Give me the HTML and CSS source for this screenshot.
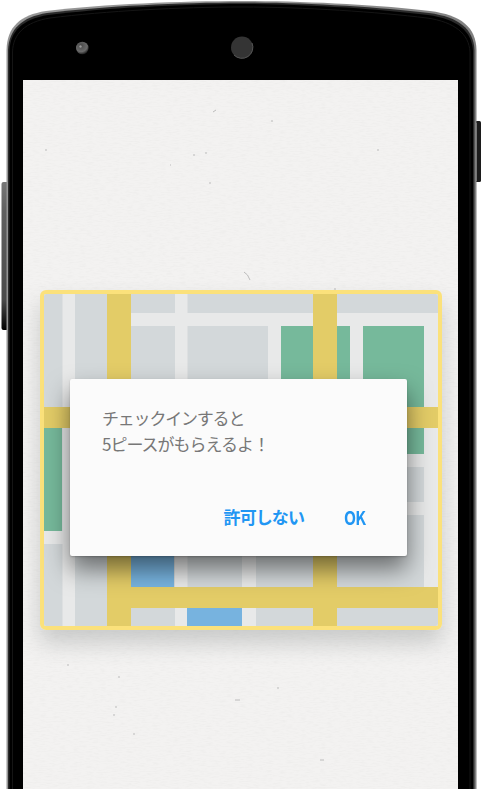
FILE: index.html
```html
<!DOCTYPE html>
<html lang="ja">
<head>
<meta charset="utf-8">
<title>チェックイン</title>
<link rel="stylesheet" href="styles.css">
</head>
<body>
<div class="phone">
  <svg class="frame" width="482" height="789" viewBox="0 0 482 789" aria-hidden="true">
    <defs>
      <linearGradient id="rim" x1="0" x2="1" y1="0" y2="0">
        <stop offset="0" stop-color="#959595"/><stop offset=".5" stop-color="#999"/><stop offset="1" stop-color="#808080"/>
      </linearGradient>
      <linearGradient id="key" x1="0" x2="0" y1="0" y2="1">
        <stop offset="0" stop-color="#777"/><stop offset=".2" stop-color="#606060"/><stop offset=".8" stop-color="#4a4a4a"/><stop offset="1" stop-color="#000"/>
      </linearGradient>
      <radialGradient id="lens" cx=".4" cy=".3" r=".7">
        <stop offset="0" stop-color="#444"/><stop offset=".25" stop-color="#555"/><stop offset=".7" stop-color="#6a6a6a"/><stop offset="1" stop-color="#222"/>
      </radialGradient>
    </defs>
    <rect x="1.500" y="182" width="7" height="148" rx="2" fill="url(#key)"/>
    <rect x="475" y="121" width="6" height="61" rx="1.500" fill="#1c1c1c"/>
    <path d="M6.500 800V50C7 27 20 15 46 11C105 4 180 1 242 1S380 5 430 11C461 15 476 27 476.500 50V800Z" fill="url(#rim)"/>
    <path d="M8 800V50C9 29 22 17 47 13C105 6 180 2.500 242 2.500S378 7 429 13C459 17 473.500 29 474.500 50V800Z" fill="#2b2b2b"/>
    <path d="M9.500 800V51C10 31 23 19 48 15C105 8 180 4 242 4S378 9 428 15C457 19 472 31 473 51V800Z" fill="#000"/>
    <path d="M12.500 800V52C13 34 25 22 50 18C105 11 180 7 242 7S378 12 427 18C455 22 469 34 470 52V800" fill="none" stroke="#151515"/>
    <path d="M476.500 123V181" stroke="#777"/>
    <circle cx="82.300" cy="48" r="6.300" fill="url(#lens)"/>
    <circle cx="80.500" cy="46.500" r="1.200" fill="#999"/>
    <circle cx="242" cy="47.500" r="11" fill="#343434"/>
    <path d="M234 55A11 11 0 0 0 252 43" fill="none" stroke="#555"/>
  </svg>
  <main class="screen">
    <svg class="paper" width="435" height="709" viewBox="23 80 435 709" aria-hidden="true">
      <filter id="grain" x="0" y="0" width="100%" height="100%">
        <feTurbulence type="fractalNoise" baseFrequency=".15 .8" numOctaves="3" seed="4"/>
        <feColorMatrix values="0 0 0 0 .5  0 0 0 0 .5  0 0 0 0 .48  .2 0 0 0 -.085"/>
      </filter>
      <rect x="23" y="80" width="435" height="709" filter="url(#grain)"/>
      <path d="M244 272q4 2 6 8M335 288v3M213 112l3-2M205 153h2M209 183h2M170 165h1M193 155h2M271 121h2M377 150h2M45 150h2M67 665h2M118 677h2M115 707h2M113 715h2M133 734h2M277 688h2M235 700h5M320 760h4" fill="none" stroke="#bbb"/>
    </svg>
    <section class="map">
      <svg class="tiles" width="394" height="332" viewBox="44 294 394 332" aria-hidden="true">
        <rect x="44" y="294" width="394" height="332" fill="#d3d8da"/>
        <path fill="#e8e9e9" d="M62.500 294H75V626H62.500ZM175 294h12.500V626H175ZM131 313H438v13H131ZM268 326h13v81h-13ZM350 326h13v81h-13ZM424 313h14v274h-14ZM44 531h19v13H44ZM337 454h101v13H337ZM337 502h101v13H337ZM242 428h14v198h-14Z"/>
        <path d="M281 326h69v81h-69ZM363 326h61v128h-61ZM44 428h18v103H44Z" fill="#76b99b"/>
        <path d="M131 530h43v57h-43ZM187 608h55v18h-55Z" fill="#77b3df"/>
        <path d="M107 294h24V626h-24ZM313 294h24V626h-24ZM44 407H438v21H44ZM107 587H438v21H107Z" fill="#e3cc67"/>
      </svg>
      <div class="dialog" role="dialog">
        <p class="message"><span class="line">チェックインすると</span><br>5ピースがもらえるよ！</p>
        <div class="actions"><span class="deny">許可しない</span><span class="ok">OK</span></div>
      </div>
    </section>
  </main>
</div>
</body>
</html>
```
FILE: styles.css
```css
* {
  box-sizing: border-box;
}
body {
  margin: 0;
  background: #fff;
  overflow: hidden;
  font-family: "Noto Sans CJK JP", sans-serif;
}
.phone {
  position: relative;
  width: 482px;
  height: 789px;
  padding: 80px 24px 0 23px;
  overflow: hidden;
}
.frame {
  position: absolute;
  inset: 0;
}
.screen {
  position: relative;
  width: 435px;
  height: 709px;
  padding: 210px 16px 0 17px;
  background: #f3f2f1;
  overflow: hidden;
}
.paper {
  position: absolute;
  inset: 0;
}
.map {
  position: relative;
  display: grid;
  width: 402px;
  height: 340px;
  border: 4px solid #fbe17b;
  border-radius: 6px;
  box-shadow: 0 13px 22px rgba(70, 80, 80, 0.24);
}
.tiles,
.dialog {
  grid-area: 1 / 1;
}
.tiles {
  display: block;
  border-radius: 2px;
}
.dialog {
  position: relative;
  display: flex;
  flex-direction: column;
  justify-content: space-between;
  width: 337px;
  height: 177px;
  margin: 85px 0 0 26px;
  padding: 26px 40px 26px 32px;
  border-radius: 2px;
  background: #fbfbfb;
  box-shadow: 0 1px 2px rgba(0, 0, 0, 0.2), 0 13px 24px rgba(0, 0, 0, 0.5);
}
.message {
  margin: 0;
  color: #777;
  font-size: 17px;
  line-height: 26px;
  letter-spacing: -1px;
  white-space: nowrap;
}
.line {
  letter-spacing: -1.2px;
}
.actions {
  display: flex;
  justify-content: flex-end;
  gap: 40px;
  color: #2196f3;
  font-size: 17px;
  font-weight: 700;
  line-height: 26px;
  letter-spacing: -0.9px;
}
.ok {
  transform: scale(0.92, 1.1);
  transform-origin: left center;
}
```
